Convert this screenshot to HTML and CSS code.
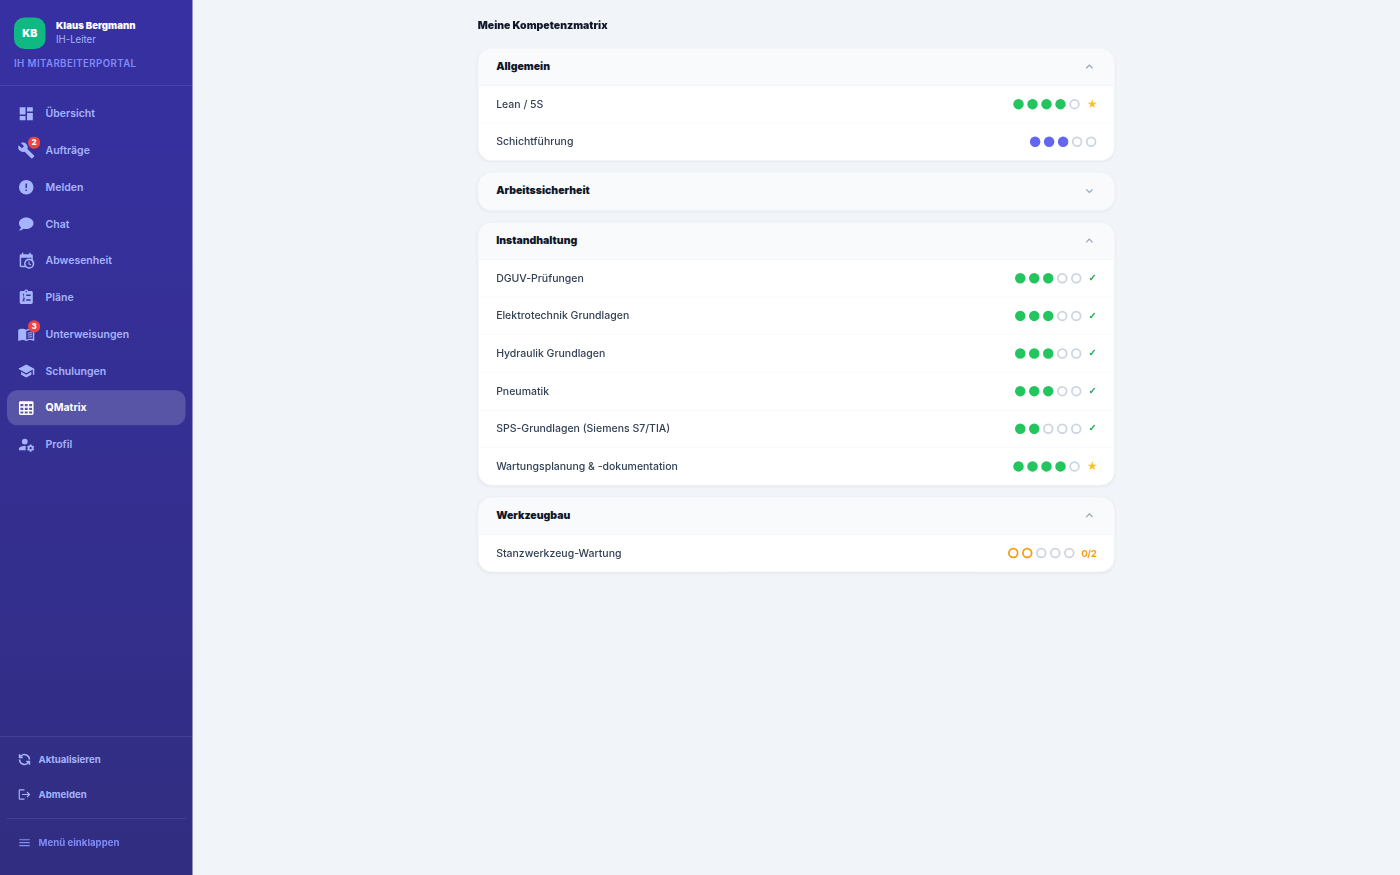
FILE: index.html
```html
<!DOCTYPE html>
<html lang="de">
<head>
<meta charset="UTF-8" />
<title>Meine Kompetenzmatrix | IH Mitarbeiterportal</title>
<meta name="viewport" content="width=device-width, initial-scale=1.0" />
<link rel="stylesheet" href="styles.css">
</head>
<body>
<div class="app">
    <aside class="sidebar">
        <header class="profile">
            <div class="profile-row">
                <div class="avatar">KB</div>
                <div>
                    <div class="profile-name">Klaus Bergmann</div>
                    <div class="profile-role">IH-Leiter</div>
                </div>
            </div>
            <div class="portal">IH MITARBEITERPORTAL</div>
        </header>

        <nav class="nav">
            <a class="nav-item">
                <span class="icon"><svg viewBox="0 0 24 24"><path d="M13,3V9H21V3M13,21H21V11H13M3,21H11V15H3M3,13H11V3H3V13Z"/></svg></span>
                <span class="label">Übersicht</span>
            </a>
            <a class="nav-item">
                <span class="icon"><svg viewBox="0 0 24 24"><path d="M22.7,19L13.6,9.9C14.5,7.6 14,4.9 12.1,3C10.1,1 7.1,0.6 4.7,1.7L9,6L6,9L1.6,4.7C0.4,7.1 0.9,10.1 2.9,12.1C4.8,14 7.5,14.5 9.8,13.6L18.9,22.7C19.3,23.1 19.9,23.1 20.3,22.7L22.6,20.4C23.1,20 23.1,19.3 22.7,19Z"/></svg><b class="badge">2</b></span>
                <span class="label">Aufträge</span>
            </a>
            <a class="nav-item">
                <span class="icon"><svg viewBox="0 0 24 24"><path d="M13,13H11V7H13M13,17H11V15H13M12,2A10,10 0 0,0 2,12A10,10 0 0,0 12,22A10,10 0 0,0 22,12A10,10 0 0,0 12,2Z"/></svg></span>
                <span class="label">Melden</span>
            </a>
            <a class="nav-item">
                <span class="icon"><svg viewBox="0 0 24 24"><path d="M12,3C17.5,3 22,6.58 22,11C22,15.42 17.5,19 12,19C10.76,19 9.57,18.82 8.47,18.5C5.55,21 2,21 2,21C4.33,18.67 4.7,17.1 4.75,16.5C3.05,15.07 2,13.13 2,11C2,6.58 6.5,3 12,3Z"/></svg></span>
                <span class="label">Chat</span>
            </a>
            <a class="nav-item">
                <span class="icon"><svg viewBox="0 0 24 24"><path d="M15,13H16.5V15.82L18.94,17.23L18.19,18.53L15,16.69V13M19,8H5V19H9.67C9.24,18.09 9,17.07 9,16A7,7 0 0,1 16,9C17.07,9 18.09,9.24 19,9.67V8M5,21C3.89,21 3,20.1 3,19V5C3,3.89 3.89,3 5,3H6V1H8V3H16V1H18V3H19A2,2 0 0,1 21,5V11.1C22.24,12.36 23,14.09 23,16A7,7 0 0,1 16,23C14.09,23 12.36,22.24 11.1,21H5M16,11.15A4.85,4.85 0 0,0 11.15,16C11.15,18.68 13.32,20.85 16,20.85A4.85,4.85 0 0,0 20.85,16C20.85,13.32 18.68,11.15 16,11.15Z"/></svg></span>
                <span class="label">Abwesenheit</span>
            </a>
            <a class="nav-item">
                <span class="icon"><svg viewBox="0 0 24 24"><path fill-rule="evenodd" d="M19 3H14.82C14.4 1.84 13.3 1 12 1S9.6 1.84 9.18 3H5C3.9 3 3 3.9 3 5V19C3 20.1 3.9 21 5 21H19C20.1 21 21 20.1 21 19V5C21 3.9 20.1 3 19 3M12 3A1 1 0 0 1 12 5A1 1 0 0 1 12 3M7 7H9V11H8V8H7V7M7 12.5H10V14.2L8.4 16H10V17H7V15.8L8.7 13.5H7V12.5M12 8H18V10H12V8M12 14.5H18V16.5H12V14.5Z"/></svg></span>
                <span class="label">Pläne</span>
            </a>
            <a class="nav-item">
                <span class="icon"><svg viewBox="0 0 24 24"><path d="M21 5c-1.11-.35-2.33-.5-3.5-.5-1.95 0-4.05.4-5.5 1.5-1.45-1.1-3.55-1.5-5.5-1.5S2.45 4.9 1 6v14.65c0 .25.25.5.5.5.1 0 .15-.05.25-.05C3.1 20.45 5.05 20 6.5 20c1.95 0 4.05.4 5.5 1.5 1.35-.85 3.8-1.5 5.5-1.5 1.65 0 3.35.3 4.75 1.05.1.05.15.05.25.05.25 0 .5-.25.5-.5V6c-.6-.45-1.25-.75-2-1zm0 13.5c-1.1-.35-2.3-.5-3.5-.5-1.7 0-4.15.65-5.5 1.5V8c1.35-.85 3.8-1.5 5.5-1.5 1.2 0 2.4.15 3.5.5v11.5z"/><path d="M14 9.9c1.8-.8 4-.9 6-.5v1.5c-2-.4-4.2-.3-6 .6zM14 12.6c1.8-.8 4-.9 6-.5v1.5c-2-.4-4.2-.3-6 .6zM14 15.3c1.8-.8 4-.9 6-.5v1.5c-2-.4-4.2-.3-6 .6z"/></svg><b class="badge">3</b></span>
                <span class="label">Unterweisungen</span>
            </a>
            <a class="nav-item">
                <span class="icon"><svg viewBox="0 0 24 24"><path d="M12,3L1,9L12,15L21,10.09V17H23V9M5,13.18V17.18L12,21L19,17.18V13.18L12,17L5,13.18Z"/></svg></span>
                <span class="label">Schulungen</span>
            </a>
            <a class="nav-item active">
                <span class="icon"><svg viewBox="0 0 24 24"><path d="M4,3H20A2,2 0 0,1 22,5V20A2,2 0 0,1 20,22H4A2,2 0 0,1 2,20V5A2,2 0 0,1 4,3M4,7V10H8V7H4M10,7V10H14V7H10M20,10V7H16V10H20M4,12V15H8V12H4M4,20H8V17H4V20M10,12V15H14V12H10M10,20H14V17H10V20M20,20V17H16V20H20M20,12H16V15H20V12Z"/></svg></span>
                <span class="label">QMatrix</span>
            </a>
            <a class="nav-item">
                <span class="icon"><svg viewBox="0 0 24 24"><path d="M10 4A4 4 0 0 0 6 8A4 4 0 0 0 10 12A4 4 0 0 0 14 8A4 4 0 0 0 10 4M17 12C16.87 12 16.76 12.09 16.74 12.21L16.55 13.53C16.25 13.66 15.96 13.82 15.7 14L14.46 13.5C14.35 13.5 14.22 13.5 14.15 13.63L13.15 15.36C13.09 15.47 13.11 15.6 13.21 15.68L14.27 16.5C14.25 16.67 14.24 16.83 14.24 17C14.24 17.17 14.25 17.33 14.27 17.5L13.21 18.32C13.12 18.4 13.09 18.53 13.15 18.64L14.15 20.37C14.21 20.5 14.34 20.5 14.46 20.5L15.7 20C15.96 20.18 16.24 20.35 16.55 20.47L16.74 21.79C16.76 21.91 16.86 22 17 22H19C19.11 22 19.22 21.91 19.24 21.79L19.43 20.47C19.73 20.34 20 20.18 20.27 20L21.5 20.5C21.63 20.5 21.76 20.5 21.83 20.37L22.83 18.64C22.89 18.53 22.86 18.4 22.77 18.32L21.7 17.5C21.72 17.33 21.74 17.17 21.74 17C21.74 16.83 21.73 16.67 21.7 16.5L22.76 15.68C22.85 15.6 22.88 15.47 22.82 15.36L21.82 13.63C21.76 13.5 21.63 13.5 21.5 13.5L20.27 14C20 13.82 19.73 13.65 19.42 13.53L19.23 12.21C19.22 12.09 19.11 12 19 12H17M10 14C5.58 14 2 15.79 2 18V20H11.68A7 7 0 0 1 11 17A7 7 0 0 1 11.64 14.09C11.11 14.03 10.56 14 10 14M18 15.5C18.83 15.5 19.5 16.17 19.5 17C19.5 17.84 18.83 18.5 18 18.5C17.16 18.5 16.5 17.84 16.5 17C16.5 16.17 17.17 15.5 18 15.5Z"/></svg></span>
                <span class="label">Profil</span>
            </a>
        </nav>

        <footer class="actions">
            <a class="action">
                <svg class="stroke" viewBox="0 0 24 24"><path d="M20.5 12a8.500 8.500 0 0 0-14.500-6L3.500 8.500M3.500 3v5.500H9M3.500 12a8.500 8.500 0 0 0 14.500 6l2.500-2.500M20.500 21v-5.500H15"/></svg>
                <span>Aktualisieren</span>
            </a>
            <a class="action">
                <svg viewBox="0 0 24 24"><path d="M17 7L15.59 8.41L18.17 11H8V13H18.17L15.59 15.58L17 17L22 12M4 5H12V3H4C2.9 3 2 3.9 2 5V19C2 20.1 2.9 21 4 21H12V19H4V5Z"/></svg>
                <span>Abmelden</span>
            </a>
            <a class="action collapse">
                <svg viewBox="0 0 24 24"><path d="M3,6H21V8H3V6M3,11H21V13H3V11M3,16H21V18H3V16Z"/></svg>
                <span>Menü einklappen</span>
            </a>
        </footer>
    </aside>

    <main class="content">
        <h1>Meine Kompetenzmatrix</h1>

        <section class="card">
            <h2><span>Allgemein</span><svg class="chevron" viewBox="0 0 24 24"><path d="M6.500 15l5.500-5.500 5.500 5.500"/></svg></h2>
            <div class="skill">
                <span class="name">Lean / 5S</span>
                <span class="dots"><i class="ok"></i><i class="ok"></i><i class="ok"></i><i class="ok"></i><i></i></span>
                <span class="star">★</span>
            </div>
            <div class="skill">
                <span class="name">Schichtführung</span>
                <span class="dots"><i class="own"></i><i class="own"></i><i class="own"></i><i></i><i></i></span>
            </div>
        </section>

        <section class="card">
            <h2><span>Arbeitssicherheit</span><svg class="chevron" viewBox="0 0 24 24"><path d="M6.500 9.500l5.500 5.500 5.500-5.500"/></svg></h2>
        </section>

        <section class="card">
            <h2><span>Instandhaltung</span><svg class="chevron" viewBox="0 0 24 24"><path d="M6.500 15l5.500-5.500 5.500 5.500"/></svg></h2>
            <div class="skill">
                <span class="name">DGUV-Prüfungen</span>
                <span class="dots"><i class="ok"></i><i class="ok"></i><i class="ok"></i><i></i><i></i></span>
                <span class="check">✓</span>
            </div>
            <div class="skill">
                <span class="name">Elektrotechnik Grundlagen</span>
                <span class="dots"><i class="ok"></i><i class="ok"></i><i class="ok"></i><i></i><i></i></span>
                <span class="check">✓</span>
            </div>
            <div class="skill">
                <span class="name">Hydraulik Grundlagen</span>
                <span class="dots"><i class="ok"></i><i class="ok"></i><i class="ok"></i><i></i><i></i></span>
                <span class="check">✓</span>
            </div>
            <div class="skill">
                <span class="name">Pneumatik</span>
                <span class="dots"><i class="ok"></i><i class="ok"></i><i class="ok"></i><i></i><i></i></span>
                <span class="check">✓</span>
            </div>
            <div class="skill">
                <span class="name">SPS-Grundlagen (Siemens S7/TIA)</span>
                <span class="dots"><i class="ok"></i><i class="ok"></i><i></i><i></i><i></i></span>
                <span class="check">✓</span>
            </div>
            <div class="skill">
                <span class="name">Wartungsplanung &amp; -dokumentation</span>
                <span class="dots"><i class="ok"></i><i class="ok"></i><i class="ok"></i><i class="ok"></i><i></i></span>
                <span class="star">★</span>
            </div>
        </section>

        <section class="card">
            <h2><span>Werkzeugbau</span><svg class="chevron" viewBox="0 0 24 24"><path d="M6.500 15l5.500-5.500 5.500 5.500"/></svg></h2>
            <div class="skill">
                <span class="name">Stanzwerkzeug-Wartung</span>
                <span class="dots"><i class="need"></i><i class="need"></i><i></i><i></i><i></i></span>
                <span class="target">0/2</span>
            </div>
        </section>
    </main>
</div>
</body>
</html>
```
FILE: styles.css
```css
* {
    box-sizing:border-box;
    margin:0px;
    padding:0px;
}

html {
    height:100%;
    overflow:hidden;
}

body {
    height:100%;
    overflow:hidden;
    font-family:Inter, "Liberation Sans", sans-serif;
    font-size:12px;
    color:#0f172a;
    background-color:#f1f5f9;
}

/* compact density: the whole app is drawn at 87.5% */
.app {
    display:flex;
    width:1600px;
    height:1000px;
    margin:0px -200px -125px 0px;
    transform:scale(0.875);
    transform-origin:0 0;
}

svg {
    display:block;
    fill:currentColor;
}

/* Sidebar */

.sidebar {
    display:flex;
    flex:none;
    flex-direction:column;
    width:220px;
    color:#a5b4fc;
    background:linear-gradient(180deg, #3730a3, #312e81);
}

.profile {
    height:98px;
    padding:20px 16px 0px;
    border-bottom:1px solid rgba(255, 255, 255, 0.12);
}

.profile-row {
    display:flex;
    align-items:center;
    gap:12px;
}

.avatar {
    display:flex;
    align-items:center;
    justify-content:center;
    width:36px;
    height:36px;
    padding-bottom:2px;
    border-radius:12px;
    font-size:12px;
    font-weight:900;
    color:#fff;
    background-color:#10b981;
}

.profile-name {
    margin-top:-2px;
    font-size:11px;
    font-weight:900;
    line-height:16px;
    color:#fff;
}

.profile-role {
    font-size:11px;
    line-height:16px;
}

.portal {
    margin-top:8px;
    font-size:11px;
    font-weight:600;
    line-height:16px;
    letter-spacing:0.5px;
    color:#818cf8;
}

.nav {
    display:flex;
    flex:1;
    flex-direction:column;
    gap:2px;
    padding:12px 8px;
}

.nav-item {
    display:flex;
    align-items:center;
    gap:12px;
    height:40px;
    padding:0px 12px;
    border-radius:12px;
    font-size:12px;
    font-weight:600;
}

.nav-item.active {
    font-weight:700;
    color:#fff;
    background-color:rgba(255, 255, 255, 0.18);
}

.label {
    padding-bottom:1px;
}

.icon {
    position:relative;
    width:20px;
    height:20px;
}

.badge {
    position:absolute;
    top:-6px;
    right:-6px;
    width:14px;
    height:14px;
    border-radius:50%;
    font-size:9px;
    font-weight:900;
    line-height:14px;
    color:#fff;
    text-align:center;
    background-color:#ef4444;
}

.actions {
    display:flex;
    flex-direction:column;
    gap:4px;
    height:159px;
    padding:8px;
    border-top:1px solid rgba(255, 255, 255, 0.12);
}

.action {
    display:flex;
    align-items:center;
    gap:8px;
    height:36px;
    padding:0px 12px;
    font-size:11px;
    font-weight:700;
}

.action svg {
    width:16px;
    height:16px;
}

.action .stroke {
    fill:none;
    stroke:currentColor;
    stroke-width:2.6;
}

.collapse {
    height:54px;
    margin-top:5px;
    border-top:1px solid rgba(255, 255, 255, 0.12);
    color:#818cf8;
}

/* Skill matrix */

.content {
    display:flex;
    flex:1;
    flex-direction:column;
    align-items:center;
    padding-top:20px;
}

h1 {
    width:728px;
    margin-bottom:17.5px;
    font-size:12px;
    font-weight:900;
    line-height:17px;
}

.card {
    width:728px;
    margin-bottom:13px;
    border:1px solid #f1f5f9;
    border-radius:16px;
    overflow:hidden;
    background-color:#fff;
    box-shadow:0px 1px 3px rgba(15, 23, 42, 0.05);
}

h2 {
    display:flex;
    align-items:center;
    justify-content:space-between;
    height:42px;
    padding:0px 20px 1px;
    border-bottom:1px solid #f1f5f9;
    font-size:12px;
    font-weight:900;
    background-color:#f8fafc;
}

.chevron {
    width:16px;
    height:16px;
    fill:none;
    stroke:#94a3b8;
    stroke-width:2;
}

.skill {
    display:flex;
    align-items:center;
    gap:8px;
    height:43px;
    padding:0px 20px;
    border-bottom:1px solid #f8fafc;
    color:#334155;
}

.skill:last-child {
    height:42px;
    border-bottom:none;
}

.name {
    flex:1;
    font-size:12px;
    font-weight:500;
}

.dots {
    display:flex;
    gap:4px;
}

.dots i {
    width:12px;
    height:12px;
    border:2px solid #cbd5e1;
    border-radius:50%;
}

.dots .ok {
    border-color:#22c55e;
    background-color:#22c55e;
}

.dots .own {
    border-color:#6366f1;
    background-color:#6366f1;
}

.dots .need {
    border-color:#f59e0b;
}

.star {
    width:11px;
    font-size:12px;
    font-weight:700;
    color:#fbbf24;
}

.check {
    width:9px;
    font-family:"DejaVu Sans", sans-serif;
    font-size:11px;
    font-weight:700;
    color:#16a34a;
    -webkit-text-stroke:0.4px #16a34a;
}

.target {
    font-size:11px;
    font-weight:700;
    letter-spacing:-0.4px;
    color:#f59e0b;
}
```
